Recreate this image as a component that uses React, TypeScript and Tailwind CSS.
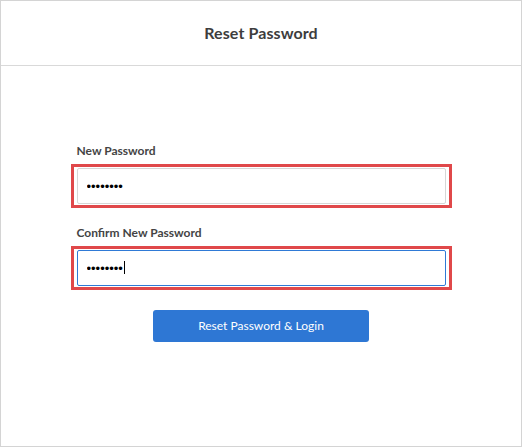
import React from 'react';

const Field: React.FC<{ label: string; focused?: boolean; className?: string }> = ({ label, focused, className }) => (
  <div className={className}>
    <label className="block pl-[6px] text-[12px] font-bold leading-[14px] text-[#444] mb-[6px]">{label}</label>
    <div className="border-[3px] border-[#e0484a] px-[3px] py-[1px]">
      <div className="relative">
        <input
          type="password"
          defaultValue="12345678"
          className={
            focused
              ? 'block w-full h-[36px] rounded-[2px] border border-[#2f7ad6] bg-white px-[9px] text-[13px] text-black outline-none'
              : 'block w-full h-[36px] rounded-[2px] border border-[#d6d6d6] bg-white px-[9px] text-[13px] text-black outline-none'
          }
          style={{ fontFamily: '"Liberation Sans", Arial, sans-serif' }}
        />
        {/* caret of the focused field */}
        {focused && <span className="absolute left-[47px] top-[11px] h-[13px] w-px bg-black" />}
      </div>
    </div>
  </div>
);

const App: React.FC = () => {
  return (
    <div className="w-[522px] h-[447px] bg-white border border-[#d4d4d4] flex flex-col" style={{ fontFamily: 'Lato, "Liberation Sans", sans-serif' }}>
      <header className="h-[65px] shrink-0 border-b border-[#d9d9d9] flex items-center justify-center">
        <h1 className="text-[16px] font-bold text-[#3d3d3d] tracking-[0.1px]">Reset Password</h1>
      </header>

      <main className="flex flex-col items-center pt-[78px]">
        <div className="w-[381px]">
          <Field label="New Password" />
          <Field label="Confirm New Password" focused className="mt-[18px]" />
          <div className="flex justify-center mt-[20px]">
            <button className="w-[216px] h-[32px] rounded-[3px] bg-[#2e77d4] text-white text-[12px] hover:bg-[#2567bd]">
              Reset Password &amp; Login
            </button>
          </div>
        </div>
      </main>
    </div>
  );
};

export default App;
